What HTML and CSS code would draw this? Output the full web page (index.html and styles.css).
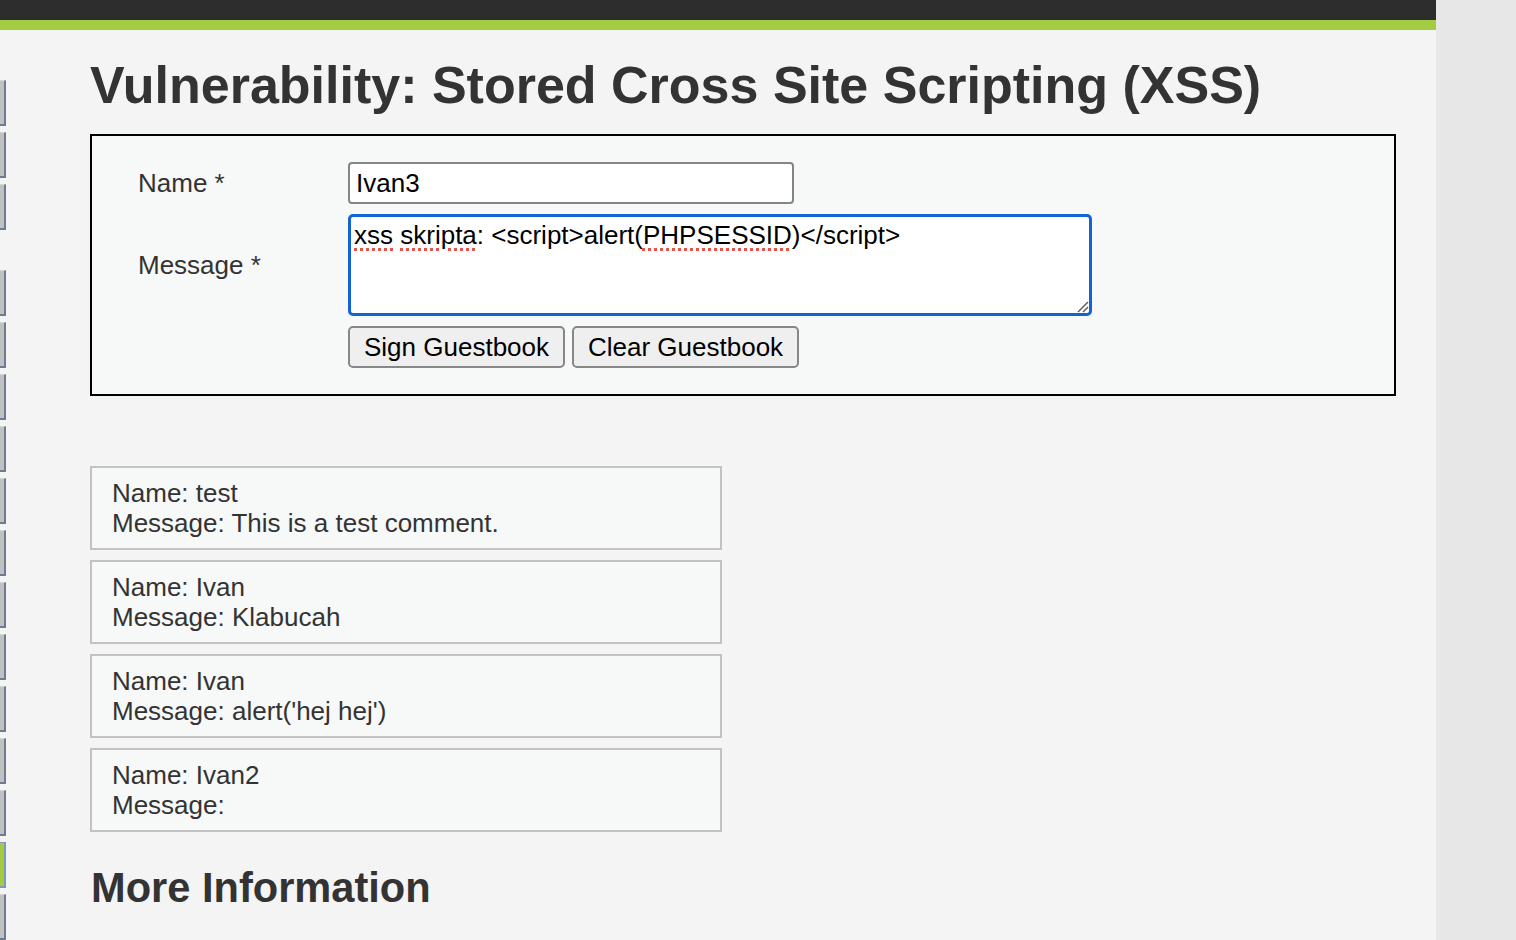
FILE: index.html
```html
<!DOCTYPE html>
<html lang="en">
<head>
<meta charset="utf-8">
<title>Vulnerability: Stored Cross Site Scripting (XSS)</title>
<link rel="stylesheet" href="styles.css">
</head>
<body>
<div class="page">
  <div class="topbar"></div>
  <div class="greenbar"></div>
  <div class="main">
    <nav class="menu">
      <div class="menu-group">
        <div class="menu-btn"></div>
        <div class="menu-btn"></div>
        <div class="menu-btn"></div>
      </div>
      <div class="menu-group">
        <div class="menu-btn"></div>
        <div class="menu-btn"></div>
        <div class="menu-btn"></div>
        <div class="menu-btn"></div>
        <div class="menu-btn"></div>
        <div class="menu-btn"></div>
        <div class="menu-btn"></div>
        <div class="menu-btn"></div>
        <div class="menu-btn"></div>
        <div class="menu-btn"></div>
        <div class="menu-btn"></div>
        <div class="menu-btn menu-btn-active"></div>
        <div class="menu-btn"></div>
      </div>
    </nav>
    <div class="content">
      <h1 class="title">Vulnerability: Stored Cross Site Scripting (XSS)</h1>
      <div class="vuln-area">
        <form class="gb-form">
          <label class="gb-label" for="txtName">Name *</label>
          <div class="gb-field">
            <input class="gb-input" id="txtName" type="text" value="Ivan3">
          </div>
          <label class="gb-label">Message *</label>
          <div class="gb-field">
            <div class="gb-textarea" role="textbox"><span class="spell">xss</span> <span class="spell">skripta</span>: &lt;script&gt;alert(<span class="spell">PHPSESSID</span>)&lt;/script&gt;<svg class="resize-grip" width="16" height="16" viewBox="0 0 16 16"><path d="M15 5 L5 15 M15 10 L10 15" stroke="#5e5e5e" stroke-width="1.5" fill="none"/></svg></div>
          </div>
          <div></div>
          <div class="gb-buttons">
            <button type="button" class="gb-btn">Sign Guestbook</button>
            <button type="button" class="gb-btn">Clear Guestbook</button>
          </div>
        </form>
      </div>
      <div class="entries">
        <div class="entry">Name: test<br>Message: This is a test comment.</div>
        <div class="entry">Name: Ivan<br>Message: Klabucah</div>
        <div class="entry">Name: Ivan<br>Message: alert('hej hej')</div>
        <div class="entry">Name: Ivan2<br>Message: </div>
      </div>
      <h2 class="more-info">More Information</h2>
    </div>
  </div>
</div>
</body>
</html>
```

FILE: styles.css
```css
html, body {
  margin: 0;
  padding: 0;
}
body {
  background: #e7e7e7;
  font-family: "Liberation Sans", Arial, sans-serif;
  font-size: 26px;
  color: #333333;
  overflow: hidden;
}
.page {
  width: 1436px;
  height: 940px;
  overflow: hidden;
  background: #f4f4f4;
}
.topbar {
  height: 20px;
  background: #2d2d2d;
}
.greenbar {
  height: 10px;
  background: #a4cc42;
}
.main {
  display: flex;
  align-items: flex-start;
}
.menu {
  width: 6px;
  flex: 0 0 6px;
  padding-top: 50px;
  display: flex;
  flex-direction: column;
  gap: 40px;
}
.menu-group {
  display: flex;
  flex-direction: column;
  gap: 6px;
}
.menu-btn {
  box-sizing: border-box;
  width: 6px;
  height: 46px;
  background: #c1c1c1;
  border-top: 1px solid #d6d6d6;
  border-right: 2px solid #6f7b93;
  border-bottom: 2px solid #6f7b93;
}
.menu-btn-active {
  background: #a4cc3e;
  border-top-color: #7b9ac0;
  border-right-color: #7b9ac0;
  border-bottom-color: #7b9ac0;
}
.content {
  margin-left: 84px;
  width: 1306px;
}
.title {
  margin: 25px 0 0;
  font-size: 52px;
  line-height: 60px;
  font-weight: bold;
  color: #333333;
}
.vuln-area {
  margin-top: 19px;
  border: 2px solid #000000;
  background: #f7f8f8;
  padding: 26px 0 26px 46px;
}
.gb-form {
  display: grid;
  grid-template-columns: 210px auto;
  row-gap: 10px;
  align-items: center;
  justify-items: start;
}
.gb-label {
  color: #333333;
  line-height: 30px;
}
.gb-input {
  box-sizing: border-box;
  width: 446px;
  height: 42px;
  margin: 0;
  padding: 0 6px;
  border: 2px solid #858585;
  border-radius: 4px;
  background: #ffffff;
  font-family: "Liberation Sans", Arial, sans-serif;
  font-size: 26px;
  color: #000000;
  outline: none;
}
.gb-textarea {
  position: relative;
  box-sizing: border-box;
  width: 744px;
  height: 102px;
  padding: 3px 3px;
  border: 3px solid #1463d2;
  border-radius: 5px;
  background: #ffffff;
  font-size: 26px;
  line-height: 30px;
  color: #000000;
  white-space: pre-wrap;
}
.spell {
  text-decoration: underline dotted #e5534b;
  text-decoration-thickness: 3px;
  text-underline-offset: 4px;
}
.resize-grip {
  position: absolute;
  right: 0;
  bottom: 0;
}
.gb-buttons {
  display: flex;
  gap: 7px;
}
.gb-btn {
  box-sizing: border-box;
  height: 42px;
  margin: 0;
  padding: 0 14px;
  border: 2px solid #878787;
  border-radius: 5px;
  background: #efefef;
  font-family: "Liberation Sans", Arial, sans-serif;
  font-size: 26px;
  color: #000000;
}
.entries {
  margin-top: 70px;
  display: flex;
  flex-direction: column;
  gap: 10px;
}
.entry {
  box-sizing: border-box;
  width: 632px;
  border: 2px solid #c2c2c2;
  background: #f7f8f8;
  padding: 10px 20px;
  line-height: 30px;
  color: #333333;
}
.more-info {
  margin: 32px 0 0 1px;
  font-size: 41.6px;
  line-height: 48px;
  font-weight: bold;
  color: #333333;
}
```
